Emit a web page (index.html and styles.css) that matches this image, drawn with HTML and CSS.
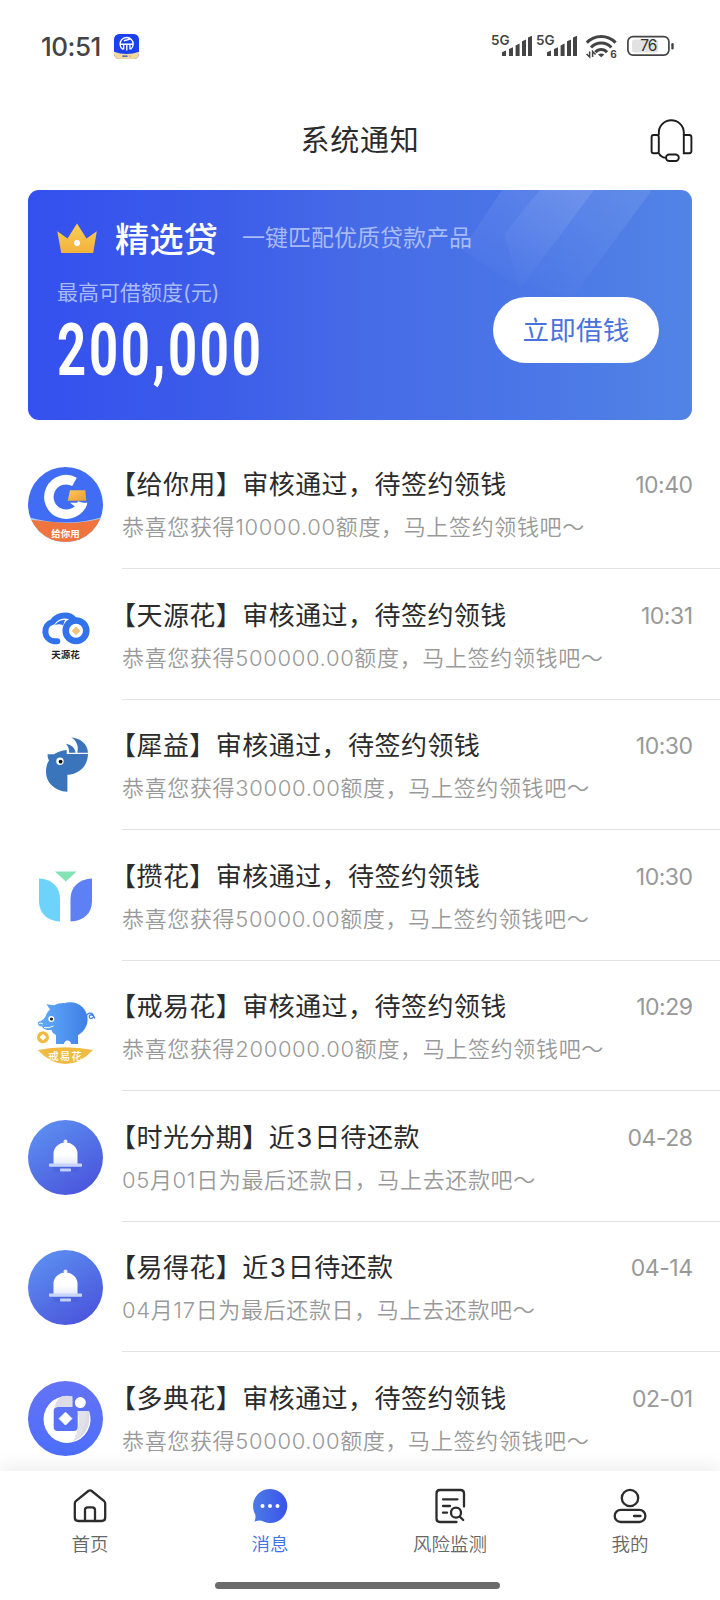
FILE: index.html
```html
<!DOCTYPE html>
<html lang="zh-CN">
<head>
<meta charset="utf-8">
<title>系统通知</title>
<link rel="stylesheet" href="styles.css">
</head>
<body>
<svg class="defs" width="0" height="0" aria-hidden="true">
  <defs>
    <linearGradient id="bellBg" x1="0.1" y1="0.1" x2="0.7" y2="1"><stop offset="0" stop-color="#5c8ef0"/><stop offset="1" stop-color="#4b56dc"/></linearGradient>
    <linearGradient id="bellFill" x1="0" y1="0" x2="0" y2="1"><stop offset="0" stop-color="#fff"/><stop offset=".6" stop-color="#fff"/><stop offset="1" stop-color="#e6ebfc"/></linearGradient>
    <linearGradient id="gold" x1="0" y1="0" x2="1" y2="1"><stop offset="0" stop-color="#fbc95c"/><stop offset="1" stop-color="#ee9b2e"/></linearGradient>
    <linearGradient id="crown" x1="0" y1="0" x2="0" y2="1"><stop offset="0" stop-color="#fbd057"/><stop offset="1" stop-color="#f3b13d"/></linearGradient>
    <linearGradient id="pig" gradientUnits="userSpaceOnUse" x1="10" y1="0" x2="60" y2="0"><stop offset="0" stop-color="#63adfa"/><stop offset="1" stop-color="#3f7ee6"/></linearGradient>
    <linearGradient id="duo" x1="0" y1="0" x2="0" y2="1"><stop offset="0" stop-color="#6573f6"/><stop offset="1" stop-color="#4c6efb"/></linearGradient>
    <linearGradient id="chat" x1="0" y1="0" x2="1" y2="0"><stop offset="0" stop-color="#4c7ce4"/><stop offset="1" stop-color="#3a53ec"/></linearGradient>
    <linearGradient id="ray" x1="0.7" y1="0" x2="0.3" y2="1"><stop offset="0" stop-color="#fff" stop-opacity=".09"/><stop offset="1" stop-color="#fff" stop-opacity=".01"/></linearGradient>
    <clipPath id="round"><circle cx="37.5" cy="37.5" r="37.5"/></clipPath>
    <symbol id="bell" viewBox="0 0 75 75">
      <circle cx="37.5" cy="37.5" r="37.5" fill="url(#bellBg)"/>
      <path d="M24 47h28l-3 5H27z" fill="#3d4fcf" opacity=".25"/>
      <circle cx="37.5" cy="21.6" r="2" fill="#e6ebfd"/>
      <path d="M25.5 44V34a12 11.5 0 0 1 24 0v10z" fill="url(#bellFill)"/>
      <rect x="21" y="43.6" width="33" height="3.2" rx=".8" fill="#c9d4fa"/>
      <rect x="32" y="48.6" width="11" height="2.8" rx=".6" fill="#c5d0fa"/>
    </symbol>
    <symbol id="bars" viewBox="0 0 32 22">
      <path d="M1 17.2l4-1.6V21H1zM8 14l4-1.8V21H8zM14.6 10.5l4-1.9V21h-4zM21 6.3l4-1.9V21h-4zM27 2.4l4-1.7V21h-4z" fill="#444"/>
    </symbol>
  </defs>
</svg>
<div class="screen">
  <div class="status">
    <div class="status-left">
      <span class="clock">10:51</span>
      <svg class="app-badge" viewBox="0 0 24 24">
        <rect width="24" height="24" rx="5" fill="#1c3ff0"/>
        <path d="M0 17q12 4.500 24 0v2a5 5 0 0 1-5 5H5a5 5 0 0 1-5-5z" fill="#f2d9a0"/>
        <path d="M8.500 14.800A6.300 6.300 0 1 1 16 14.600M6.500 9.800h12M12.300 9.800v6M9.300 9.800v5M15.300 9.800v5M9.500 6.500l6-1.500" fill="none" stroke="#fff" stroke-width="1.300"/>
        <path d="M8 21.300h5" stroke="#5271c4" stroke-width="1.600"/><path d="M14.500 21.300h2" stroke="#e8b56a" stroke-width="1.600"/>
      </svg>
    </div>
    <svg class="status-right" viewBox="490 30 186 32">
      <text class="net" x="491" y="44.500">5G</text>
      <use href="#bars" x="501" y="35" width="32" height="22"/>
      <text class="net" x="536" y="44.500">5G</text>
      <use href="#bars" x="546" y="35" width="32" height="22"/>
      <g fill="none" stroke="#444" stroke-width="3">
        <path d="M586.800 42.600a20 20 0 0 1 28.800 0"/>
        <path d="M591 47.600a13.800 13.800 0 0 1 20.400 0"/>
        <path d="M595.400 52.200a7.800 7.800 0 0 1 11.600 0"/>
      </g>
      <path d="M598 54.600q3.200-2.400 6.400 0L601.200 57.300z" fill="#444"/>
      <path d="M589.600 51.500V57l-3-3M592.600 57v-5.500l3 3" fill="none" stroke="#444" stroke-width="1.500"/>
      <text class="six" x="610.200" y="58">6</text>
      <rect x="632" y="39.500" width="26" height="13" rx="2.500" fill="#e2e2e2"/>
      <rect x="627.900" y="36.600" width="41" height="18.500" rx="5" fill="none" stroke="#444" stroke-width="1.700"/>
      <rect x="671.300" y="43" width="2.400" height="6.400" rx="1.200" fill="#444"/>
      <text class="batt" x="648.400" y="51.400" text-anchor="middle">76</text>
    </svg>
  </div>

  <header class="header">
    <h1>系统通知</h1>
    <svg class="headset" viewBox="650 117 43 45" fill="none" stroke="#1c1c1c" stroke-width="1.900">
      <rect x="651.600" y="134" width="7.200" height="18.200" rx="2"/>
      <path d="M683.800 134h5.400a2.200 2.200 0 0 1 2.200 2.200v13.800a2.200 2.200 0 0 1-2.200 2.200h-5.400z"/>
      <path d="M658.800 134v-2.500a12.500 12.300 0 0 1 25 0v2.500M658.800 152.200c1.200 2.700 3.500 4.300 6.800 4.700"/>
      <rect x="666" y="153.500" width="12.800" height="6.500" rx="3.200"/>
    </svg>
  </header>

  <section class="banner">
    <svg class="rays" viewBox="0 0 240 120">
      <path d="M50 0H142L68 98 10 60z" fill="url(#ray)"/>
      <path d="M88 0H142L68 98 52 44z" fill="url(#ray)"/>
      <path d="M142 0H200L120 108 72 92z" fill="url(#ray)"/>
    </svg>
    <div class="banner-main">
      <div class="banner-head">
        <svg class="crown" viewBox="0 0 40 31"><path d="M.3 8.200l10.200 7.400L20 .4l9.500 15.200L39.800 8.200 36.200 30H4.200z" fill="url(#crown)"/><circle cx="20" cy="20" r="3" fill="#fff"/></svg>
        <strong>精选贷</strong>
        <span>一键匹配优质贷款产品</span>
      </div>
      <div class="banner-label">最高可借额度(元)</div>
      <div class="amount"><span>200,000</span></div>
    </div>
    <a class="borrow">立即借钱</a>
  </section>

  <main class="list">
    <article class="row">
      <svg class="avatar" viewBox="0 0 75 75">
        <g clip-path="url(#round)">
          <rect width="75" height="75" fill="#416cf4"/>
          <path d="M0 50q37.500 11 75 0v25H0z" fill="#a9cdf4"/>
          <path d="M0 52.500q20 2 37 3.500Q58 56 75 51v24H0z" fill="#f0743d"/>
        </g>
        <path d="M46.500 14.800A17.300 17.300 0 1 0 54.500 35.700" fill="none" stroke="#fff" stroke-width="9.500"/>
        <path d="M42 35.700H59.500L57 42 49 41z" fill="#fff"/>
        <path d="M42 23.300H57.300L58.300 33.700H39.700z" fill="url(#gold)"/>
        <text class="logo-text" x="37.500" y="69.500" fill="#fff">给你用</text>
      </svg>
      <div class="body"><div class="line"><h2>【给你用】审核通过，待签约领钱</h2><time>10:40</time></div><p>恭喜您获得10000.00额度，马上签约领钱吧～</p></div>
    </article>
    <article class="row">
      <svg class="avatar" viewBox="0 0 75 75">
        <path d="M29.300 43.300H26a10 10 0 0 1-1.500-19.500C28 19.500 32 17.600 37 17.600c4 0 7 1.400 9 4" fill="none" stroke="#3272ea" stroke-width="6" stroke-linecap="round"/>
        <path d="M27 27c3-4 6-5 10-5l-2 5.500q-3-2-8-.5z" fill="#3272ea"/>
        <circle cx="48" cy="32.700" r="10.300" fill="#fff" stroke="#3272ea" stroke-width="6.500"/>
        <path d="M48 28.900l3.900 3.900-3.900 3.900-3.900-3.900z" fill="#f2c37c" stroke="#f2c37c" stroke-linejoin="round"/>
        <text class="logo-text" x="37.500" y="60.300" fill="#222">天源花</text>
      </svg>
      <div class="body"><div class="line"><h2>【天源花】审核通过，待签约领钱</h2><time>10:31</time></div><p>恭喜您获得500000.00额度，马上签约领钱吧～</p></div>
    </article>
    <article class="row">
      <svg class="avatar" viewBox="0 0 75 75" fill="#3a74ba">
        <path d="M19.500 26.300h6.500q5-3.600 12.700-4.300v4H60c-.5 13-9 20-20.600 20.800V63.800C26 63 18 54 18 44c0-5 1-8.500 3-11.500-1-2-1.500-4-1.500-6.200z"/>
        <path d="M43 9.300C53 10.500 59.500 16 60 24.700H49.300C51 18 48.500 12.500 43 9.300zM38 15.700c5.500 1 9 4 9.700 9h-6.500c0-3.700-1-6.500-3.200-9z"/>
        <circle cx="32" cy="33.300" r="3.700" fill="#fff"/><circle cx="32.600" cy="33.600" r="1.900" fill="#111"/>
      </svg>
      <div class="body"><div class="line"><h2>【犀益】审核通过，待签约领钱</h2><time>10:30</time></div><p>恭喜您获得30000.00额度，马上签约领钱吧～</p></div>
    </article>
    <article class="row">
      <svg class="avatar" viewBox="0 0 75 75">
        <path d="M11 19.500C24 20 32 28 32 40v22.500C19 62 11 54 11 42z" fill="#6ed3fa"/>
        <path d="M64 19.500C51 20 42.500 28 42.500 40v22.500C56 62 64 54 64 42z" fill="#5d80f5"/>
        <path d="M27 12.500h21.700L37.800 22.500z" fill="#83e3b4"/>
      </svg>
      <div class="body"><div class="line"><h2>【攒花】审核通过，待签约领钱</h2><time>10:30</time></div><p>恭喜您获得50000.00额度，马上签约领钱吧～</p></div>
    </article>
    <article class="row">
      <svg class="avatar" viewBox="0 0 75 75">
        <g fill="url(#pig)">
          <circle cx="42.300" cy="30.500" r="17.300"/>
          <path d="M18.500 15.300l7.500 1q5-2.500 10-2.300L56 40l-6 6V55h-7q-.5-3.500-3.500-3.500T36 55h-8V46c-2.500-1-4-3-4.500-5-4 .5-8-.5-9.500-3.500-3 0-4.800-2-4-4.500 2-1 5-1.500 7.500-5.500C18.500 24 20.500 22 22 20.500z"/>
        </g>
        <circle cx="23.300" cy="30" r="3" fill="#fff"/><circle cx="23.500" cy="30" r="1.600" fill="#222"/>
        <path d="M11 34.500q2-1 4 .5M16 38.500q5 1 9.500-1.500" fill="none" stroke="#fff" stroke-width=".9"/>
        <path d="M58.500 26.500q3-4 6-1.500c3 3-1.500 6-3 3.500-1.500-3 4-4.500 5.200 1" fill="none" stroke="#3f7ee6" stroke-width="1.200"/>
        <circle cx="15" cy="48.300" r="6" fill="#f0bb45"/><path d="M15 45l3.300 3.300L15 51.600l-3.300-3.300z" fill="#fff"/>
        <path d="M9.700 61Q37 55.500 65 61 52 75 37.500 75T9.700 61z" fill="#f0bb45"/>
        <text class="logo-text kai" x="37.500" y="71" fill="#fff">戒易花</text>
      </svg>
      <div class="body"><div class="line"><h2>【戒易花】审核通过，待签约领钱</h2><time>10:29</time></div><p>恭喜您获得200000.00额度，马上签约领钱吧～</p></div>
    </article>
    <article class="row">
      <svg class="avatar"><use href="#bell" width="75" height="75"/></svg>
      <div class="body"><div class="line"><h2>【时光分期】近<span class="num">3</span>日待还款</h2><time>04-28</time></div><p>05月01日为最后还款日，马上去还款吧～</p></div>
    </article>
    <article class="row">
      <svg class="avatar"><use href="#bell" width="75" height="75"/></svg>
      <div class="body"><div class="line"><h2>【易得花】近<span class="num">3</span>日待还款</h2><time>04-14</time></div><p>04月17日为最后还款日，马上去还款吧～</p></div>
    </article>
    <article class="row">
      <svg class="avatar" viewBox="0 0 75 75">
        <circle cx="37.500" cy="37.500" r="37.500" fill="url(#duo)"/>
        <path d="M44.300 15.500A23.500 23.500 0 1 0 61 30H49.700v16a4 4 0 0 1-4 4H29.700a4 4 0 0 1-4-4V30a4 4 0 0 1 4-4H44.300z" fill="#fff"/>
        <path d="M44.300 15.500Q29 12 26.500 27.500q1-1.500 3.200-1.500H44.300zM61 30H58Q59 50 46 60 64 52 61 30z" fill="#dcdbe6"/>
        <path d="M49.700 30H61Q62 52 45 60.500 53 45 49.700 30z" fill="#dcdbe6" opacity=".8"/>
        <path d="M37.500 31.200l6.400 6.400-6.400 6.400-6.400-6.400z" fill="#fff" stroke="#fff" stroke-linejoin="round"/>
        <circle cx="52.300" cy="21.600" r="5.500" fill="#fff"/>
      </svg>
      <div class="body"><div class="line"><h2>【多典花】审核通过，待签约领钱</h2><time>02-01</time></div><p>恭喜您获得50000.00额度，马上签约领钱吧～</p></div>
    </article>
  </main>

  <nav class="tabs">
    <a class="tab">
      <svg viewBox="0 0 36 36" fill="none" stroke="#2c2c2c" stroke-width="2.300" stroke-linejoin="round" stroke-linecap="round"><path d="M2.800 15.600q0-1.600 1.300-2.700L16.300 3q1.700-1.200 3.400 0L31.900 12.900q1.300 1.100 1.300 2.700V29.500q0 3.500-3.500 3.500H6.300q-3.500 0-3.500-3.500z"/><path d="M13 33V22q0-2.700 2.700-2.700h4.600Q23 19.300 23 22v11"/></svg>
      <span>首页</span>
    </a>
    <a class="tab active">
      <svg viewBox="0 0 36 36"><path d="M18 1a17 17 0 1 1-8.300 31.700Q6.500 32 2.500 33.700q1.500-3.500.8-7.200A17 17 0 0 1 18 1z" fill="url(#chat)"/><g fill="#fff"><circle cx="10.500" cy="18" r="2"/><circle cx="18" cy="18" r="2"/><circle cx="25.500" cy="18" r="2"/></g></svg>
      <span>消息</span>
    </a>
    <a class="tab">
      <svg viewBox="0 0 36 36" fill="none" stroke="#2c2c2c" stroke-width="2.300" stroke-linecap="round" stroke-linejoin="round"><path d="M32 18.500V5.500Q32 2 28.500 2H8Q4.500 2 4.500 5.500V30.500Q4.500 34 8 34H24.500"/><path d="M11 11.300h14.500M11 18h7M11 24.700h4"/><circle cx="24" cy="24.700" r="5"/><path d="M27.700 28.500l3.500 3.500"/></svg>
      <span>风险监测</span>
    </a>
    <a class="tab">
      <svg viewBox="0 0 36 36" fill="none" stroke="#2c2c2c" stroke-width="2.300" stroke-linecap="round"><circle cx="18" cy="10" r="8.200"/><rect x="2.700" y="21.800" width="30.700" height="12.200" rx="6.100"/><path d="M22 28h6.500"/></svg>
      <span>我的</span>
    </a>
  </nav>
  <div class="gesture"><i></i></div>
</div>
</body>
</html>
```

FILE: styles.css
```css
* { box-sizing: border-box; margin: 0; padding: 0; }
body {
  width: 720px;
  height: 1600px;
  overflow: hidden;
  background: #fff;
  color: #2b2b2b;
  font-family: Inter, "Noto Sans CJK SC", sans-serif;
}
.defs { position: absolute; }
.screen { display: flex; flex-direction: column; width: 720px; height: 1600px; }

.status {
  display: flex;
  align-items: center;
  justify-content: space-between;
  height: 92px;
  padding: 0 44px 0 41px;
}
.status-left { display: flex; align-items: center; gap: 13px; }
.clock { font-size: 26px; font-weight: 450; color: #444; letter-spacing: -.5px; }
.app-badge { width: 25px; height: 25px; }
.status-right { width: 186px; height: 32px; }
.net { font: 600 13.5px Inter, sans-serif; fill: #444; }
.six { font: 700 10px Inter, sans-serif; fill: #444; }
.batt { font: 400 15.5px Inter, sans-serif; fill: #333; letter-spacing: -.8px; }

.header {
  display: grid;
  grid-template-columns: 1fr auto 1fr;
  align-items: center;
  height: 97.5px;
  padding: 0 27px;
}
.header h1 { grid-column: 2; font-size: 29px; font-weight: 400; letter-spacing: .8px; line-height: 40px; padding-top: 1px; }
.headset { width: 43px; height: 45px; justify-self: end; }

.banner {
  position: relative;
  display: flex;
  justify-content: space-between;
  height: 230.5px;
  margin: 0 28px;
  padding: 26px 33px 0 29px;
  border-radius: 11px;
  background: linear-gradient(90deg, #3450ef 0%, #3c5ce9 28%, #466be7 50%, #4a76e7 75%, #5284e5 100%);
  color: #fff;
}
.rays { position: absolute; top: 0; right: 0; width: 240px; height: 120px; }
.banner-head { display: flex; align-items: center; height: 48px; }
.crown { width: 40px; height: 31px; margin: 0 18px 2px 0; }
.banner-head strong { font-size: 34.300px; font-weight: 500; line-height: 48px; margin-right: 24px; }
.banner-head span { font-size: 23px; font-weight: 400; color: #a9bbf5; line-height: 34px; margin-bottom: 4px; }
.banner-label { font-size: 21px; font-weight: 400; line-height: 30px; color: #a9bbf5; margin-top: 14px; }
.amount { height: 74px; line-height: 84px; }
.amount span {
  display: inline-block;
  font-family: Roboto, sans-serif;
  font-size: 73px;
  font-weight: 700;
  letter-spacing: 4px;
  transform: scaleX(.695);
  transform-origin: left center;
}
.borrow {
  width: 166px;
  height: 66px;
  margin-top: 81.5px;
  border-radius: 33px;
  background: #fff;
  color: #4a72dd;
  font-size: 26.5px;
  font-weight: 400;
  letter-spacing: .3px;
  line-height: 66px;
  text-align: center;
  flex: none;
}

.list { flex: 1; min-height: 0; overflow: hidden; padding-top: 18.5px; }
.row { display: flex; height: 130.5px; padding-left: 28px; }
.avatar { width: 75px; height: 75px; margin: 28.5px 19px 0 0; flex: none; }
.logo-text { font: 700 9.5px "Noto Sans CJK SC", sans-serif; text-anchor: middle; }
.kai { font-size: 10.5px; font-weight: 500; letter-spacing: 1px; }
.body { flex: 1; border-bottom: 1px solid #e3e3e3; padding: 28.5px 28px 0 0; }
.row:last-child .body { border: 0; }
.line { display: flex; justify-content: space-between; align-items: center; height: 36px; }
.line h2 { font-size: 26px; font-weight: 400; letter-spacing: .45px; margin-left: -12px; line-height: 36px; white-space: nowrap; }
.num { margin: 0 1.5px 0 1px; }
.line time { font-size: 23px; letter-spacing: -.5px; margin-right: -.5px; color: #999; }
.body p { font-size: 22px; font-weight: 350; color: #999; letter-spacing: .65px; line-height: 32px; margin-top: 8px; white-space: nowrap; }

.tabs {
  position: relative;
  display: grid;
  grid-template-columns: repeat(4, 1fr);
  height: 101px;
  padding-top: 17px;
  background: #fff;
  box-shadow: 0 -4px 18px rgba(0, 0, 0, .08);
}
.tab { display: flex; flex-direction: column; align-items: center; color: #666; }
.tab svg { width: 36px; height: 36px; }
.tab span { font-size: 18.5px; line-height: 26px; margin-top: 6.5px; font-weight: 350; }
.active { color: #4170e8; }
.gesture { position: relative; height: 28px; display: flex; justify-content: center; padding: 10px 5px 0 0; background: #fff; }
.gesture i { width: 285px; height: 7px; border-radius: 4px; background: #6a6b6a; }
```
